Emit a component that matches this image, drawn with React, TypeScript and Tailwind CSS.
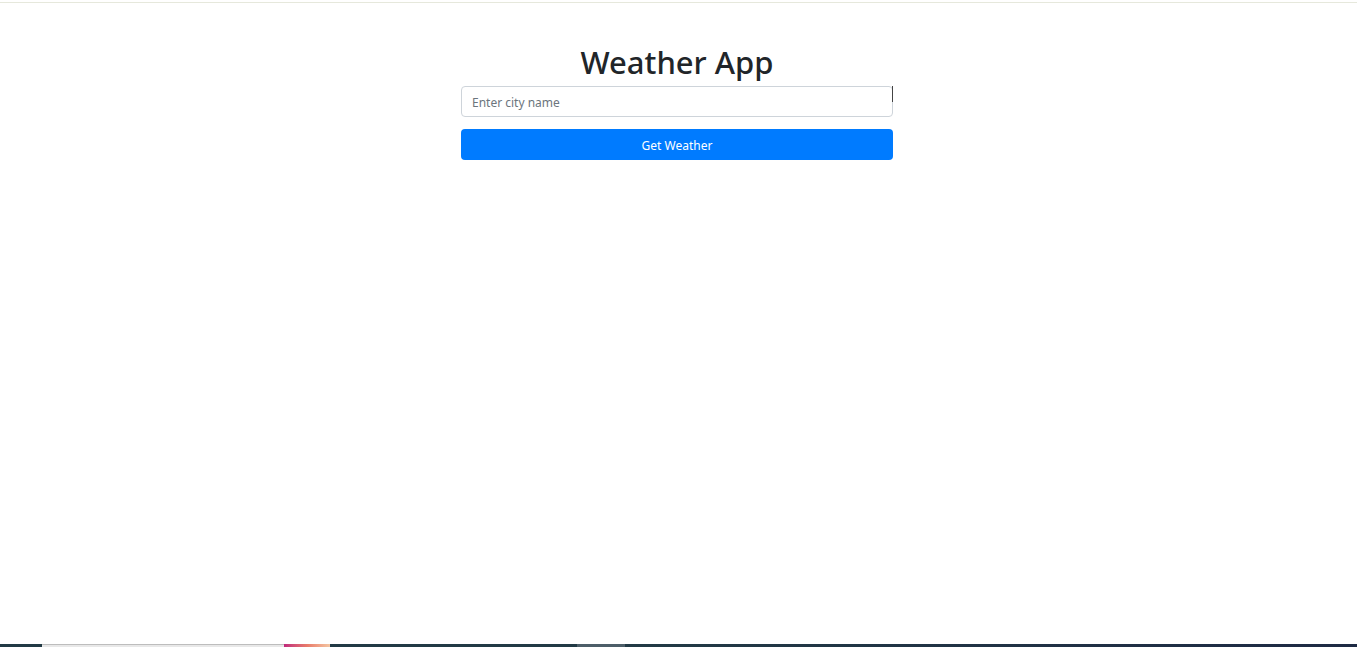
export default function App() {
  return (
    <div className="flex h-[647px] flex-col bg-white font-['Noto_Sans',sans-serif] text-[#212529]">
      {/* top strip */}
      <div className="h-[2px] bg-white" />
      <div className="h-px bg-[#e6e8dc]" />

      <main className="flex flex-1 flex-col items-center pr-[3px] pt-[39px]">
        <h1 className="text-[31px] font-medium leading-[40px]">Weather App</h1>
        <div className="mt-[4px] w-[432px]">
          <div className="relative">
            <input
              type="text"
              placeholder="Enter city name"
              className="block h-[31px] w-full rounded-[4px] border border-[#ced4da] px-[10px] pt-[2px] text-[12px] text-[#495057] outline-none placeholder:text-[#6c757d]"
            />
            <span className="absolute right-0 top-0 h-[16px] w-px bg-[#444]" />
          </div>
          <button className="mt-[12px] h-[31px] w-full rounded-[4px] bg-[#007bff] pt-[2px] text-[12px] text-white">
            Get Weather
          </button>
        </div>
      </main>

      {/* taskbar edge */}
      <div className="flex h-[3px] bg-[#223a45]">
        <div className="w-[42px]" />
        <div className="w-[242px] border-t border-[#bdbdbd] bg-[#e8e8e8]" />
        <div className="w-[46px] bg-gradient-to-r from-[#c0267a] via-[#e87a6a] to-[#f3c6a2]" />
        <div className="w-[247px]" />
        <div className="w-[48px] bg-[#4d5e68]" />
        <div className="flex-1 bg-gradient-to-r from-[#223a45] to-[#1e2a44]" />
      </div>
    </div>
  );
}
